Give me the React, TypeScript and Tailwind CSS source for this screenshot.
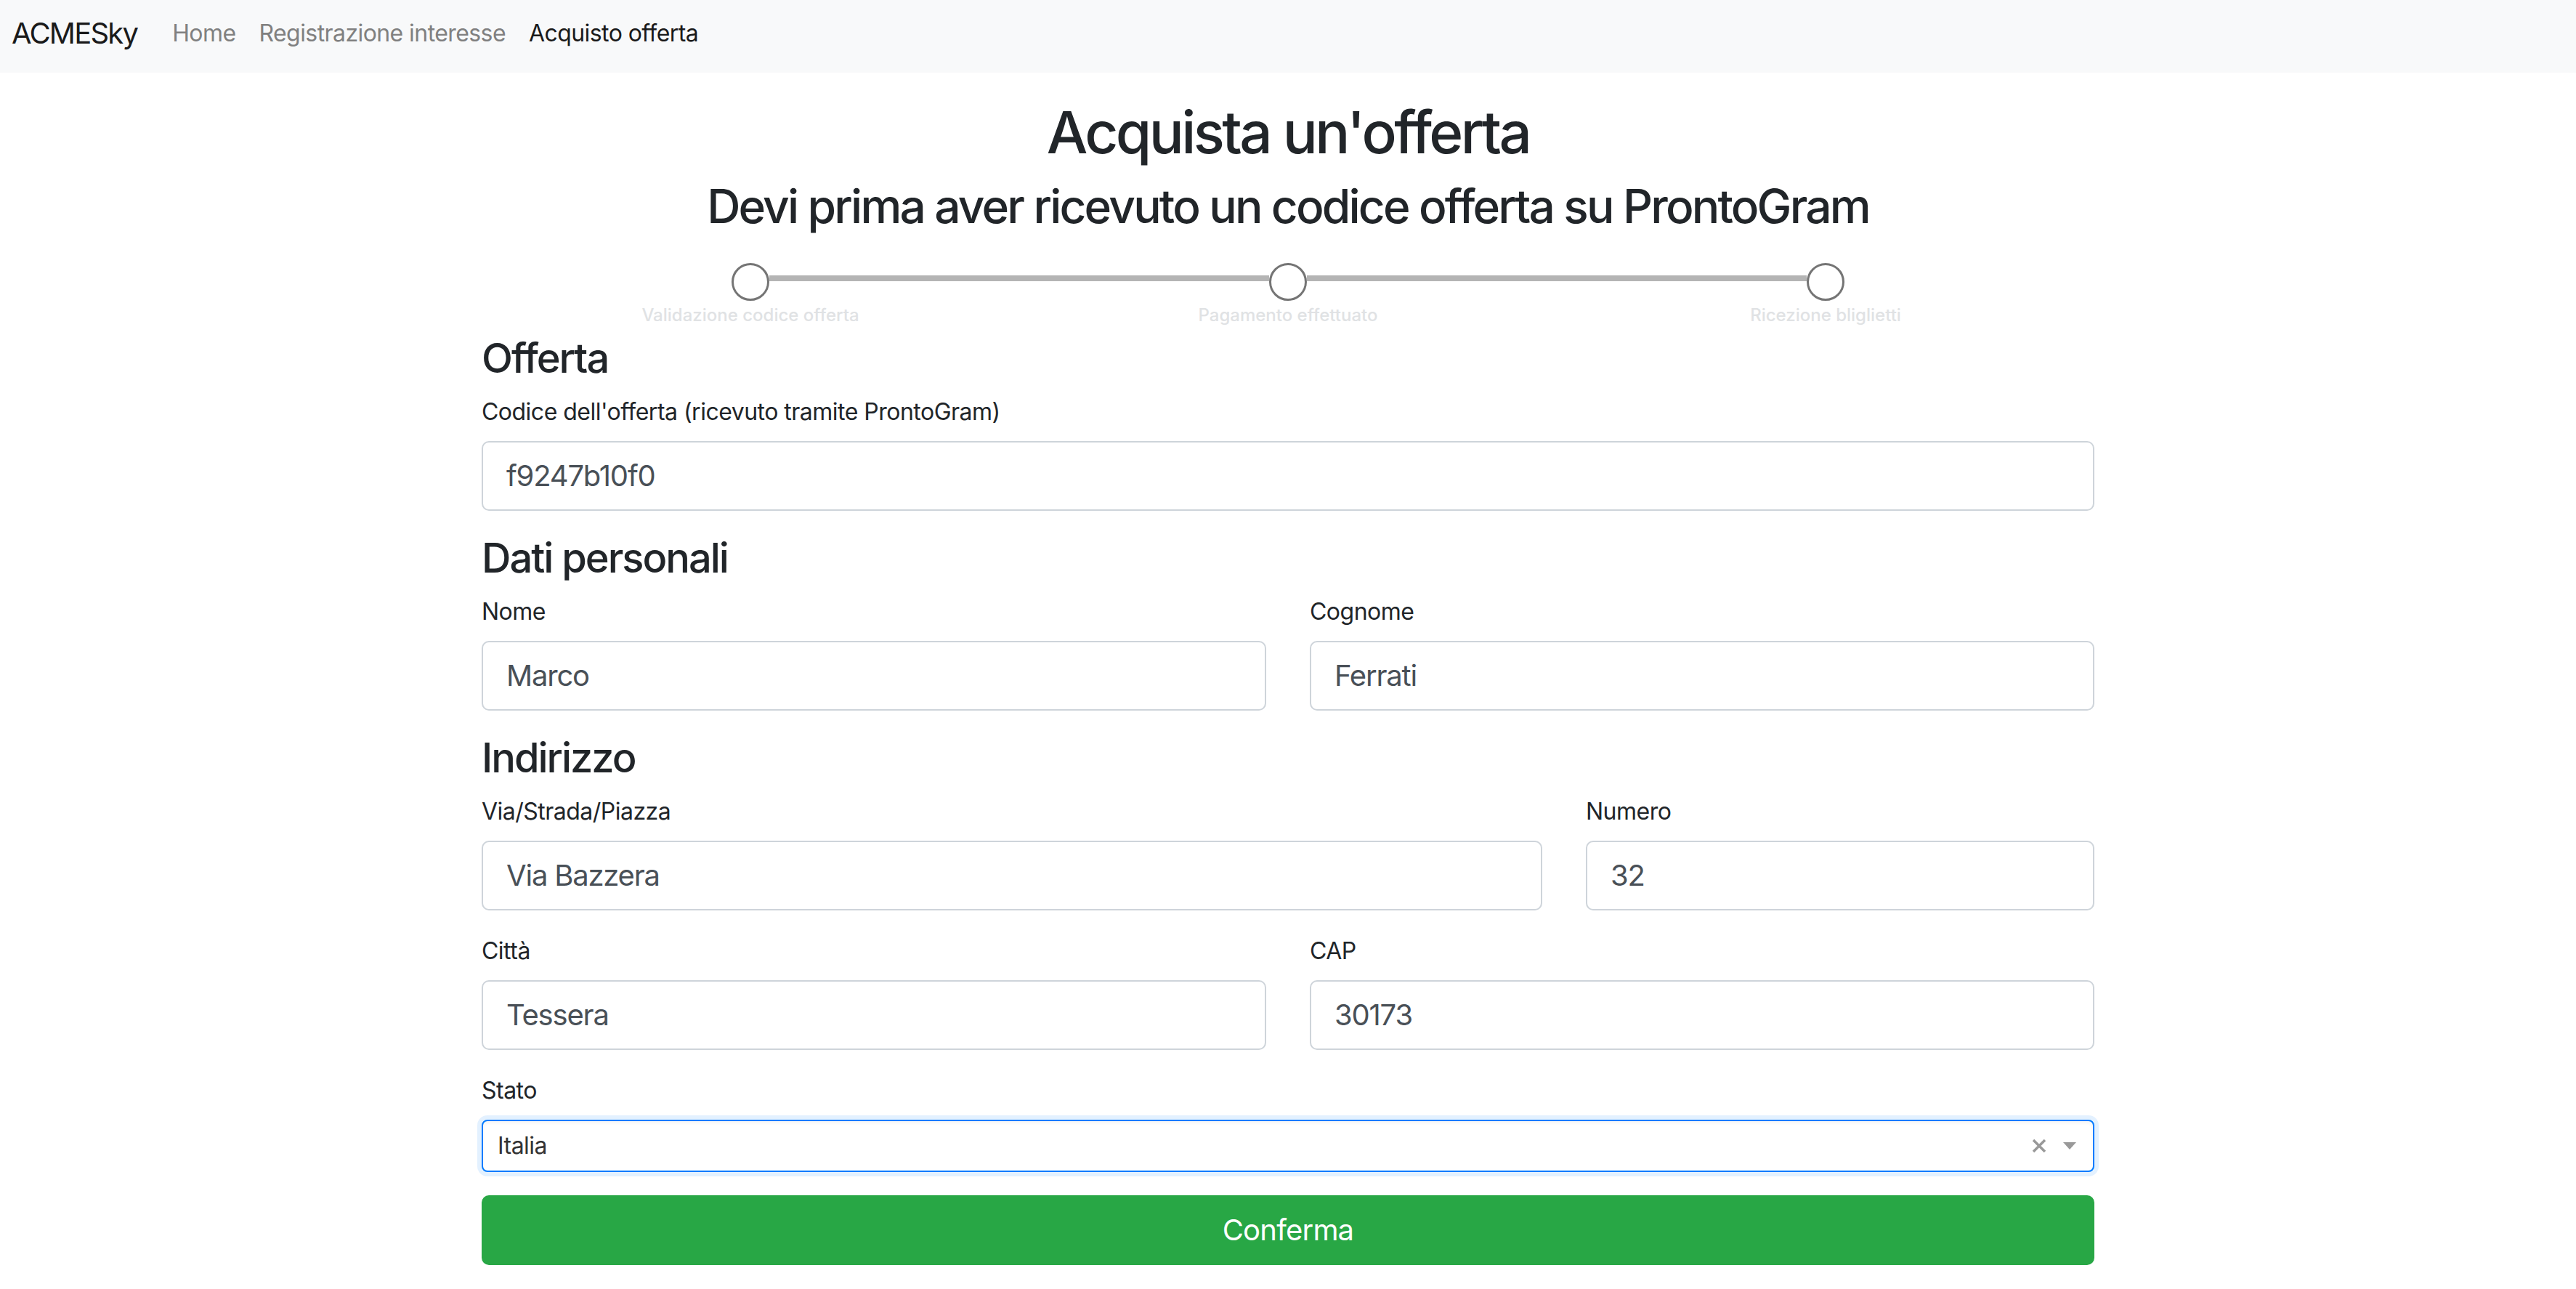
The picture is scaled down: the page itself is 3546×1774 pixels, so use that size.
import React from "react";

const font = { fontFamily: "Inter, 'Noto Sans', sans-serif" };

const steps = ["Validazione codice offerta", "Pagamento effettuato", "Ricezione bliglietti"];

function Field({ label, value }: { label: string; value: string }) {
  return (
    <div className="mb-[32px]">
      <label className="block mb-[16px] text-[32px] leading-[48px] tracking-[-0.016em] text-[#212529]">{label}</label>
      <div className="h-[96px] flex items-center px-[32px] border-2 border-[#ced4da] rounded-[10px] text-[40px] tracking-[-0.03em] text-[#495057] bg-white">
        {value}
      </div>
    </div>
  );
}

function Stepper() {
  return (
    <div className="grid grid-cols-3 pt-[23px] mb-[8px]">
      {steps.map((s, i) => (
        <div key={s} className="relative flex flex-col items-center">
          {i < steps.length - 1 && (
            <div className="absolute top-[17px] left-[calc(50%+26px)] right-[calc(-50%+26px)] h-[8px] bg-[#b4b4b4]" />
          )}
          <div className="w-[52px] h-[52px] rounded-full border-[3px] border-[#757575] bg-white" />
          <div className="mt-[2px] text-[24px] leading-[36px] text-[#e0e2e4] font-medium">{s}</div>
        </div>
      ))}
    </div>
  );
}

export default function App() {
  return (
    <div className="min-h-screen bg-white text-[#212529]" style={font}>
      <nav className="h-[100px] bg-[#f8f9fa] flex items-center pl-[16px] pb-[9px]">
        <span className="text-[40px] leading-[60px] tracking-[-0.045em] text-[#1a1a1a] mr-[32px]">ACMESky</span>
        <a className="px-[16px] text-[32px] leading-[48px] tracking-[-0.018em] text-[#808080]">Home</a>
        <a className="px-[16px] text-[32px] leading-[48px] tracking-[-0.018em] text-[#808080]">Registrazione interesse</a>
        <a className="px-[16px] text-[32px] leading-[48px] tracking-[-0.018em] text-[#1a1a1a]">Acquisto offerta</a>
      </nav>

      <main className="w-[2220px] mx-auto pt-[34px]">
        <h1 className="text-center text-[80px] leading-[1.2] tracking-[-0.045em] font-medium mb-[16px]">Acquista un'offerta</h1>
        <h2 className="text-center text-[64px] leading-[1.2] tracking-[-0.044em] font-medium mb-[16px]">
          Devi prima aver ricevuto un codice offerta su ProntoGram
        </h2>

        <Stepper />

        <h3 className="text-[56px] leading-[1.2] tracking-[-0.036em] font-medium mb-[16px]">Offerta</h3>
        <Field label="Codice dell'offerta (ricevuto tramite ProntoGram)" value="f9247b10f0" />

        <h3 className="text-[56px] leading-[1.2] tracking-[-0.036em] font-medium mb-[16px]">Dati personali</h3>
        <div className="grid grid-cols-2 gap-x-[60px]">
          <Field label="Nome" value="Marco" />
          <Field label="Cognome" value="Ferrati" />
        </div>

        <h3 className="text-[56px] leading-[1.2] tracking-[-0.036em] font-medium mb-[16px]">Indirizzo</h3>
        <div className="grid grid-cols-[1460px_700px] gap-x-[60px]">
          <Field label="Via/Strada/Piazza" value="Via Bazzera" />
          <Field label="Numero" value="32" />
        </div>
        <div className="grid grid-cols-2 gap-x-[60px]">
          <Field label="Città" value="Tessera" />
          <Field label="CAP" value="30173" />
        </div>

        <div className="mb-[32px]">
          <label className="block mb-[16px] text-[32px] leading-[48px] tracking-[-0.016em]">Stato</label>
          <div className="h-[72px] flex items-center pl-[20px] pr-[22px] border-2 border-[#007bff] rounded-[8px] bg-white shadow-[inset_0_3px_4px_rgba(0,0,0,0.04),0_0_0_6px_rgba(0,123,255,0.11)]">
            <span className="flex-1 text-[32px] tracking-[-0.016em] text-[#333333]">Italia</span>
            <svg width="20" height="20" viewBox="0 0 20 20" className="mr-[22px]">
              <path d="M2 2 L18 18 M18 2 L2 18" stroke="#999999" strokeWidth="3.5" />
            </svg>
            <svg width="20" height="12" viewBox="0 0 20 12">
              <path d="M1 1 L19 1 L10 11 Z" fill="#999999" />
            </svg>
          </div>
        </div>

        <button className="w-full h-[96px] rounded-[10px] bg-[#28a745] text-white text-[40px] tracking-[-0.02em]">Conferma</button>
      </main>
    </div>
  );
}
